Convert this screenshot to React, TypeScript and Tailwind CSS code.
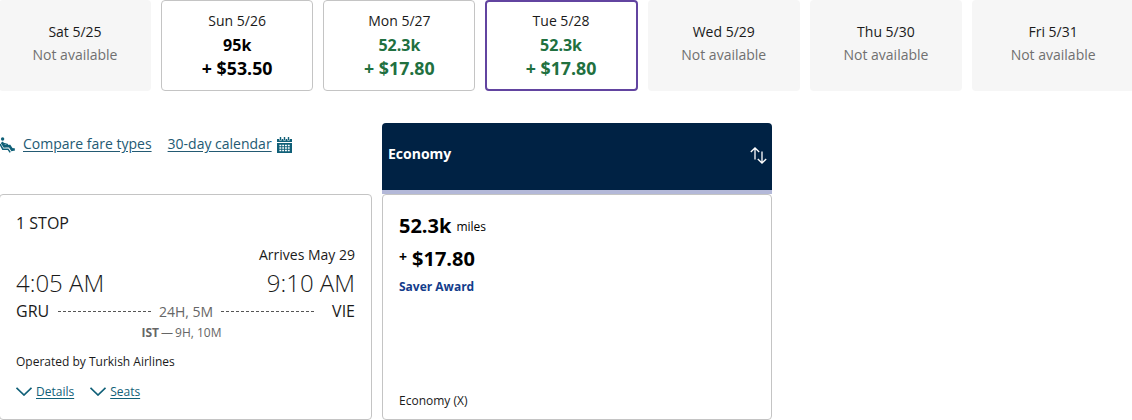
type Day = {
	label: string;
	miles?: string;
	price?: string;
	lowest?: boolean;
	selected?: boolean;
};

const days: Day[] = [
	{ label: "Sat 5/25" },
	{ label: "Sun 5/26", miles: "95k", price: "+ $53.50" },
	{ label: "Mon 5/27", miles: "52.3k", price: "+ $17.80", lowest: true },
	{
		label: "Tue 5/28",
		miles: "52.3k",
		price: "+ $17.80",
		lowest: true,
		selected: true,
	},
	{ label: "Wed 5/29" },
	{ label: "Thu 5/30" },
	{ label: "Fri 5/31" },
];

function DayCard({ day }: { day: Day }) {
	if (!day.miles) {
		return (
			<div className="h-[91px] rounded bg-[#f6f6f6] pt-5 text-center text-sm leading-[23px] text-[#1a1a1a]">
				<p>{day.label}</p>
				<p className="text-[#707070]">Not available</p>
			</div>
		);
	}

	return (
		<div
			className={`flex flex-col rounded text-center ${
				day.selected
					? "-ml-px h-[91px] border-2 border-[#6244a0] pt-[7px]"
					: "h-[91px] border border-[#c4c4c4] pt-2"
			}`}
		>
			<p className="text-sm leading-6 text-[#1a1a1a]">{day.label}</p>
			<div
				className={`font-bold ${day.lowest ? "text-[#21703f]" : "text-black"}`}
			>
				<p className="text-base leading-6">{day.miles}</p>
				<p className="text-[17.8px] leading-[23px]">{day.price}</p>
			</div>
		</div>
	);
}

function SeatIcon() {
	return (
		<svg
			width="15"
			height="16"
			viewBox="0 0 15 16"
			className="mt-[2px] shrink-0"
			fill="none"
			stroke="#106078"
		>
			<circle cx="2.6" cy="2" r="1.7" fill="#106078" stroke="none" />
			<path d="M1.8 5.2 L4.4 9.4 L9.6 9 L12 12.8 L14.8 12.2" strokeWidth="2.6" />
			<path d="M3.5 6.4 L8 7.6" strokeWidth="1.2" />
			<path d="M0 7 L2.8 12.2 L8 12.2 L10.2 15.4" strokeWidth="1.5" />
		</svg>
	);
}

function CalendarIcon() {
	return (
		<svg width="15" height="16" viewBox="0 0 15 16" className="mt-[2px]">
			<path d="M0 2 H15 V5 H0 Z M0 6 H15 V16 H0 Z" fill="#106078" />
			<path
				d="M3.5 0 V3.5 M7.5 0 V3.5 M11.5 0 V3.5"
				stroke="white"
				strokeWidth="2.4"
			/>
			<path
				d="M3.5 0 V3 M7.5 0 V3 M11.5 0 V3"
				stroke="#106078"
				strokeWidth="1.4"
			/>
			<path
				d="M2.4 8.5 H12.7 M2.4 11 H12.7 M2.4 13.5 H12.7"
				stroke="white"
				strokeWidth="1.4"
				strokeDasharray="1.9 0.9"
			/>
		</svg>
	);
}

function SortIcon() {
	return (
		<svg
			width="17"
			height="17"
			viewBox="0 0 17 17"
			fill="none"
			stroke="white"
			strokeWidth="1.3"
			className="mb-[3px]"
		>
			<path d="M0.8 5 L5 1 L9.2 5 M5 1.2 V12.5" />
			<path d="M7.8 12 L12 16 L16.2 12 M12 15.8 V4.5" />
		</svg>
	);
}

function ExpandLink({ label }: { label: string }) {
	return (
		<a href="#" className="flex items-center gap-1 text-xs text-[#106078]">
			<svg
				width="16"
				height="9"
				viewBox="0 0 16 9"
				fill="none"
				stroke="currentColor"
				strokeWidth="1.7"
				className="mb-[2px]"
			>
				<path d="M0.5 0.8 L8 8 L15.5 0.8" />
			</svg>
			<span className="underline underline-offset-2">{label}</span>
		</a>
	);
}

function DashedLine() {
	return (
		<svg width="94" height="1" className="shrink-0">
			<path d="M0 0.5 H94" stroke="#555" strokeDasharray="3 2" />
		</svg>
	);
}

function FlightCard() {
	return (
		<div className="-ml-px h-[226px] w-[373px] rounded border border-[#c4c4c4] px-4 pt-4 text-[#1a1a1a]">
			<p className="text-base leading-6">1 STOP</p>
			<p className="mt-[9px] text-right text-sm leading-[22px]">
				Arrives May 29
			</p>
			<div className="flex justify-between text-2xl leading-[34px] font-light">
				<span>4:05 AM</span>
				<span>9:10 AM</span>
			</div>
			<div className="flex items-center text-base leading-[22px]">
				<span className="w-[42px]">GRU</span>
				<DashedLine />
				<span className="w-[69px] pt-px pr-px text-center text-sm text-[#666]">
					24H, 5M
				</span>
				<DashedLine />
				<span className="ml-auto">VIE</span>
			</div>
			<p className="flex justify-center gap-[2px] pt-px pr-[8px] text-xs leading-5 text-[#666]">
				<b>IST</b>
				<span>—</span>
				<span>9H, 10M</span>
			</p>
			<p className="mt-[9px] text-xs leading-5">
				Operated by Turkish Airlines
			</p>
			<div className="mt-3 flex gap-4">
				<ExpandLink label="Details" />
				<ExpandLink label="Seats" />
			</div>
		</div>
	);
}

function FareColumn() {
	return (
		<div className="w-[390px]">
			<div className="flex h-[71px] items-center justify-between rounded-t border-b-4 border-[#b3b8d8] bg-[#002244] pr-[5px] pl-[6px] text-white">
				<span className="pb-[6px] text-sm font-bold">Economy</span>
				<SortIcon />
			</div>
			<div className="flex h-[226px] flex-col rounded border border-[#c4c4c4] px-4 pt-[15px] pb-2 text-black">
				<p className="flex items-center gap-[5px] text-xl leading-8 font-bold">
					52.3k{" "}
					<span className="pt-[2px] text-xs font-normal">miles</span>
				</p>
				<p className="flex items-center gap-[5px] pt-px text-xl leading-8 font-bold">
					<span className="pb-1 text-sm leading-7">+</span> $17.80
				</p>
				<p className="text-xs leading-6 font-bold text-[#133c8b]">
					Saver Award
				</p>
				<p className="mt-auto text-xs leading-5 text-[#1a1a1a]">
					Economy (X)
				</p>
			</div>
		</div>
	);
}

export default function App() {
	return (
		<div className="h-[420px] w-[1132px] overflow-hidden bg-white font-['Open_Sans',sans-serif]">
			<div className="-ml-px grid w-[1135px] grid-cols-[152px_152px_152px_152px_152px_152px_162px] gap-x-[10.2px]">
				{days.map((day) => (
					<DayCard key={day.label} day={day} />
				))}
			</div>
			<div className="mt-8 flex gap-[10px]">
				<div className="w-[372px]">
					<div className="flex h-[71px] items-start pt-[11px] text-sm leading-5 text-[#235a73]">
						<div className="flex items-center gap-2">
							<SeatIcon />
							<a href="#" className="underline underline-offset-2">
								Compare fare types
							</a>
						</div>
						<div className="ml-4 flex items-center gap-[5px]">
							<a href="#" className="underline underline-offset-2">
								30-day calendar
							</a>
							<CalendarIcon />
						</div>
					</div>
					<FlightCard />
				</div>
				<FareColumn />
			</div>
		</div>
	);
}
